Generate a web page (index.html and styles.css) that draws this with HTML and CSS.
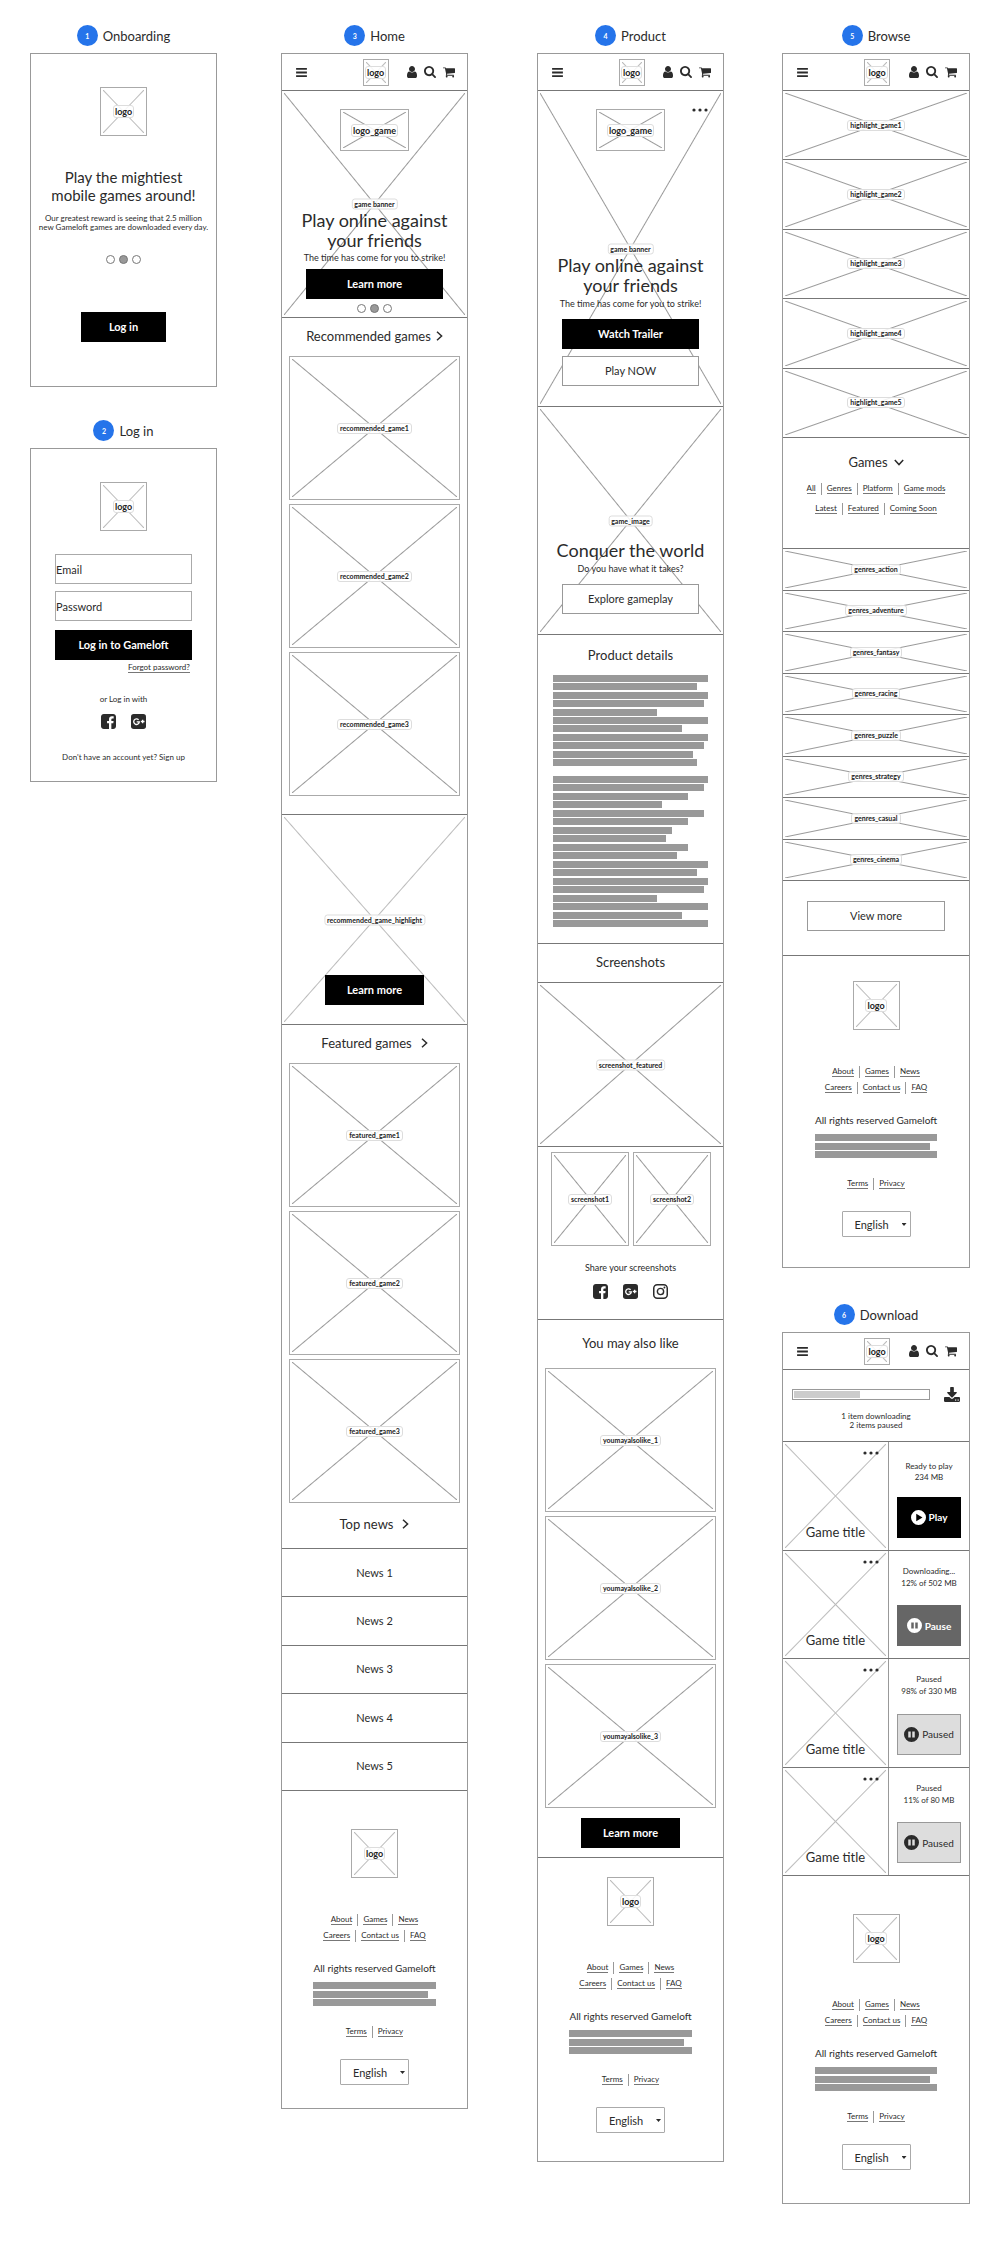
FILE: index.html
```html
<!DOCTYPE html>
<html lang="en">
<head>
<meta charset="utf-8">
<meta name="viewport" content="width=device-width, initial-scale=1">
<title>Gameloft mobile wireframes</title>
<link rel="stylesheet" href="styles.css">
</head>
<body>
<svg class="sprite" aria-hidden="true">
  <symbol id="i-menu" viewBox="0 0 12 10"><path d="M0 0h12v2H0zM0 4h12v2H0zM0 8h12v2H0z"/></symbol>
  <symbol id="i-user" viewBox="256 128 1280 1536"><path d="M1536 1399q0 109-62.5 187t-150.5 78h-854q-88 0-150.5-78t-62.5-187q0-85 8.5-160.5t31.5-152 58.5-131 94-89 134.5-34.5q131 128 313 128t313-128q76 0 134.5 34.5t94 89 58.5 131 31.5 152 8.5 160.5zm-256-887q0 159-112.5 271.5t-271.5 112.5-271.5-112.5-112.5-271.5 112.5-271.5 271.5-112.5 271.5 112.5 112.5 271.5z"/></symbol>
  <symbol id="i-search" viewBox="64 128 1664 1664"><path d="M1216 832q0-185-131.5-316.5t-316.5-131.5-316.5 131.5-131.5 316.5 131.5 316.5 316.5 131.5 316.5-131.5 131.5-316.5zm512 832q0 52-38 90t-90 38q-54 0-90-38l-343-342q-179 124-399 124-143 0-273.5-55.5t-225-150-150-225-55.5-273.5 55.5-273.5 150-225 225-150 273.5-55.5 273.5 55.5 225 150 150 225 55.5 273.5q0 220-124 399l343 343q37 37 37 90z"/></symbol>
  <symbol id="i-cart" viewBox="64 256 1664 1408"><path d="M704 1536q0 52-38 90t-90 38-90-38-38-90 38-90 90-38 90 38 38 90zm896 0q0 52-38 90t-90 38-90-38-38-90 38-90 90-38 90 38 38 90zm128-1088v512q0 24-16.5 42.5t-40.5 21.5l-1044 122q13 60 13 70 0 16-24 64h920q26 0 45 19t19 45-19 45-45 19h-1024q-26 0-45-19t-19-45q0-11 8-31.5t16-36 21.5-40 15.5-29.5l-177-823h-204q-26 0-45-19t-19-45 19-45 45-19h256q16 0 28.5 6.5t19.5 15.5 13 24.5 8 26 5.5 29.5 4.5 26h1201q26 0 45 19t19 45z"/></symbol>
  <symbol id="i-facebook" viewBox="128 128 1536 1536"><path d="M1376 128q119 0 203.5 84.5t84.5 203.5v960q0 119-84.5 203.5t-203.5 84.5h-188v-595h199l30-232h-229v-148q0-56 23.5-84t91.5-28l122-1v-207q-63-9-178-9-136 0-217.5 80t-81.5 226v171h-200v232h200v595h-532q-119 0-203.5-84.5t-84.5-203.5v-960q0-119 84.5-203.5t203.5-84.5h960z"/></symbol>
  <symbol id="i-google" viewBox="0 0 30 30"><rect width="30" height="30" rx="5.5"/><path d="M15.2 11.6A5.6 5.6 0 1 0 16.6 15.8H11.4M19.6 15H27M23.3 11.3V18.7" fill="none" stroke="#fff" stroke-width="2.6"/></symbol>
  <symbol id="i-instagram" viewBox="0 0 30 30"><rect x="1.5" y="1.5" width="27" height="27" rx="7" fill="none" stroke="currentColor" stroke-width="3"/><circle cx="15" cy="15" r="6.3" fill="none" stroke="currentColor" stroke-width="2.8"/><circle cx="22.9" cy="7.1" r="1.9"/></symbol>
  <symbol id="i-download" viewBox="64 0 1664 1536"><path d="M1344 1344q0-26-19-45t-45-19-45 19-19 45 19 45 45 19 45-19 19-45zm256 0q0-26-19-45t-45-19-45 19-19 45 19 45 45 19 45-19 19-45zm128-224v320q0 40-28 68t-68 28h-1472q-40 0-68-28t-28-68v-320q0-40 28-68t68-28h465l135 136q58 56 136 56t136-56l136-136h464q40 0 68 28t28 68zm-325-569q17 41-14 70l-448 448q-18 19-45 19t-45-19l-448-448q-31-29-14-70 17-39 59-39h256v-448q0-26 19-45t45-19h256q26 0 45 19t19 45v448h256q42 0 59 39z"/></symbol>
  <symbol id="i-chevron" viewBox="0 0 7 10"><path d="M1 .8L5.6 5 1 9.2" fill="none" stroke="currentColor" stroke-width="1.5"/></symbol>
  <symbol id="i-chevron-down" viewBox="0 0 10 7"><path d="M.8 1L5 5.6 9.2 1" fill="none" stroke="currentColor" stroke-width="1.5"/></symbol>
  <symbol id="i-play" viewBox="0 0 30 30"><path fill-rule="evenodd" d="M15 0a15 15 0 1 1 0 30a15 15 0 1 1 0-30zM10.5 7.5v15L23 15z"/></symbol>
  <symbol id="i-pause" viewBox="0 0 30 30"><path fill-rule="evenodd" d="M15 0a15 15 0 1 1 0 30a15 15 0 1 1 0-30zM8.5 9v12h5V9zM16.5 9v12h5V9z"/></symbol>
  <symbol id="i-dots" viewBox="0 0 16 4"><circle cx="2" cy="2" r="1.6"/><circle cx="8" cy="2" r="1.6"/><circle cx="14" cy="2" r="1.6"/></symbol>
</svg>

<main class="board">

  <div class="column">
    <section class="screen">
      <h2 class="screen-name"><span class="step">1</span>Onboarding</h2>
      <div class="panel panel-entry">
        <div class="frame logo"><span class="tag tag-logo">logo</span></div>
        <h3 class="intro-title">Play the mightiest<br>mobile games around!</h3>
        <p class="intro-text">Our greatest reward is seeing that 2.5 million<br>new Gameloft games are downloaded every day.</p>
        <div class="dots intro-dots"><i></i><i class="on"></i><i></i></div>
        <button class="btn btn-dark btn-login">Log in</button>
      </div>
    </section>

    <section class="screen">
      <h2 class="screen-name"><span class="step">2</span>Log in</h2>
      <form class="panel panel-entry">
        <div class="frame logo"><span class="tag tag-logo">logo</span></div>
        <div class="fields">
          <input class="field" type="email" placeholder="Email" aria-label="Email">
          <input class="field" type="password" placeholder="Password" aria-label="Password">
          <button class="btn btn-dark btn-submit" type="button">Log in to Gameloft</button>
          <a class="link forgot" href="#">Forgot password?</a>
        </div>
        <p class="small or-with">or Log in with</p>
        <div class="social social-login">
          <a href="#" aria-label="Facebook"><svg class="ico-social"><use href="#i-facebook"/></svg></a>
          <a href="#" aria-label="Google Plus"><svg class="ico-social"><use href="#i-google"/></svg></a>
        </div>
        <p class="small signup">Don't have an account yet? <a href="#">Sign up</a></p>
      </form>
    </section>
  </div>

  <div class="column">
    <section class="screen">
      <h2 class="screen-name"><span class="step">3</span>Home</h2>
      <div class="panel">
        <header class="topbar">
          <button class="icon-btn" aria-label="Menu"><svg class="ico-menu"><use href="#i-menu"/></svg></button>
          <div class="frame logo-small"><span class="tag tag-logo">logo</span></div>
          <div class="tools">
            <button class="icon-btn" aria-label="Account"><svg class="ico-user"><use href="#i-user"/></svg></button>
            <button class="icon-btn" aria-label="Search"><svg class="ico-search"><use href="#i-search"/></svg></button>
            <button class="icon-btn" aria-label="Cart"><svg class="ico-cart"><use href="#i-cart"/></svg></button>
          </div>
        </header>
        <section class="part cross banner banner-home">
          <span class="tag tag-center">game banner</span>
          <div class="frame logo-game"><span class="tag tag-logo">logo_game</span></div>
          <h3 class="hero-title">Play online against<br>your friends</h3>
          <p class="hero-text">The time has come for you to strike!</p>
          <button class="btn btn-dark btn-wide">Learn more</button>
          <div class="dots"><i></i><i class="on"></i><i></i></div>
        </section>
        <section class="part">
          <h3 class="part-title"><a href="#">Recommended games</a><svg class="ico-chevron near"><use href="#i-chevron"/></svg></h3>
          <div class="cards">
            <div class="frame card"><span class="tag">recommended_game1</span></div>
            <div class="frame card"><span class="tag">recommended_game2</span></div>
            <div class="frame card"><span class="tag">recommended_game3</span></div>
          </div>
        </section>
        <section class="part cross cross-light highlight">
          <span class="tag tag-center">recommended_game_highlight</span>
          <button class="btn btn-dark btn-short">Learn more</button>
        </section>
        <section class="part">
          <h3 class="part-title"><a href="#">Featured games</a><svg class="ico-chevron"><use href="#i-chevron"/></svg></h3>
          <div class="cards cards-last">
            <div class="frame card"><span class="tag">featured_game1</span></div>
            <div class="frame card"><span class="tag">featured_game2</span></div>
            <div class="frame card"><span class="tag">featured_game3</span></div>
          </div>
          <h3 class="part-title news-title"><a href="#">Top news</a><svg class="ico-chevron"><use href="#i-chevron"/></svg></h3>
        </section>
        <ul class="news">
          <li>News 1</li>
          <li>News 2</li>
          <li>News 3</li>
          <li>News 4</li>
          <li>News 5</li>
        </ul>
        <footer class="part foot foot-home">
          <div class="frame logo"><span class="tag tag-logo">logo</span></div>
          <nav class="links">
            <div class="links-row"><a class="link" href="#">About</a><a class="link" href="#">Games</a><a class="link" href="#">News</a></div>
            <div class="links-row"><a class="link" href="#">Careers</a><a class="link" href="#">Contact us</a><a class="link" href="#">FAQ</a></div>
          </nav>
          <p class="rights">All rights reserved Gameloft</p>
          <div class="legal"><i></i><i></i><i></i></div>
          <div class="links-row"><a class="link" href="#">Terms</a><a class="link" href="#">Privacy</a></div>
          <div class="lang"><select aria-label="Language"><option>English</option></select></div>
        </footer>
      </div>
    </section>
  </div>

  <div class="column">
    <section class="screen">
      <h2 class="screen-name"><span class="step">4</span>Product</h2>
      <div class="panel">
        <header class="topbar">
          <button class="icon-btn" aria-label="Menu"><svg class="ico-menu"><use href="#i-menu"/></svg></button>
          <div class="frame logo-small"><span class="tag tag-logo">logo</span></div>
          <div class="tools">
            <button class="icon-btn" aria-label="Account"><svg class="ico-user"><use href="#i-user"/></svg></button>
            <button class="icon-btn" aria-label="Search"><svg class="ico-search"><use href="#i-search"/></svg></button>
            <button class="icon-btn" aria-label="Cart"><svg class="ico-cart"><use href="#i-cart"/></svg></button>
          </div>
        </header>
        <section class="part cross banner banner-product">
          <span class="tag tag-center">game banner</span>
          <button class="icon-btn more-corner" aria-label="More"><svg class="ico-dots"><use href="#i-dots"/></svg></button>
          <div class="frame logo-game"><span class="tag tag-logo">logo_game</span></div>
          <h3 class="hero-title">Play online against<br>your friends</h3>
          <p class="hero-text">The time has come for you to strike!</p>
          <button class="btn btn-dark btn-wide">Watch Trailer</button>
          <button class="btn btn-wide btn-next">Play NOW</button>
        </section>
        <section class="part cross banner banner-image">
          <span class="tag tag-center">game_image</span>
          <h3 class="hero-title">Conquer the world</h3>
          <p class="hero-text">Do you have what it takes?</p>
          <button class="btn btn-wide">Explore gameplay</button>
        </section>
        <section class="part details">
          <h3 class="part-title">Product details</h3>
          <div class="lines lines-first">
            <i style="width:100%"></i><i style="width:93%"></i><i style="width:100%"></i><i style="width:97%"></i><i style="width:67%"></i><i style="width:100%"></i><i style="width:83%"></i><i style="width:100%"></i><i style="width:97%"></i><i style="width:90%"></i><i style="width:93%"></i>
          </div>
          <div class="lines lines-second">
            <i style="width:100%"></i><i style="width:97%"></i><i style="width:87%"></i><i style="width:70%"></i><i style="width:97%"></i><i style="width:87%"></i><i style="width:77%"></i><i style="width:73%"></i><i style="width:87%"></i><i style="width:80%"></i><i style="width:100%"></i><i style="width:93%"></i><i style="width:100%"></i><i style="width:97%"></i><i style="width:67%"></i><i style="width:100%"></i><i style="width:83%"></i><i style="width:100%"></i>
          </div>
        </section>
        <section class="part">
          <h3 class="part-title">Screenshots</h3>
        </section>
        <div class="part cross shot-featured"><span class="tag tag-center">screenshot_featured</span></div>
        <section class="part shots">
          <div class="thumbs">
            <div class="frame"><span class="tag">screenshot1</span></div>
            <div class="frame"><span class="tag">screenshot2</span></div>
          </div>
          <p class="share">Share your screenshots</p>
          <div class="social">
            <a href="#" aria-label="Facebook"><svg class="ico-social"><use href="#i-facebook"/></svg></a>
            <a href="#" aria-label="Google Plus"><svg class="ico-social"><use href="#i-google"/></svg></a>
            <a href="#" aria-label="Instagram"><svg class="ico-social"><use href="#i-instagram"/></svg></a>
          </div>
        </section>
        <section class="part also">
          <h3 class="part-title">You may also like</h3>
          <div class="cards">
            <div class="frame card"><span class="tag">youmayalsolike_1</span></div>
            <div class="frame card"><span class="tag">youmayalsolike_2</span></div>
            <div class="frame card"><span class="tag">youmayalsolike_3</span></div>
          </div>
          <button class="btn btn-dark btn-short">Learn more</button>
        </section>
        <footer class="part foot foot-product">
          <div class="frame logo"><span class="tag tag-logo">logo</span></div>
          <nav class="links">
            <div class="links-row"><a class="link" href="#">About</a><a class="link" href="#">Games</a><a class="link" href="#">News</a></div>
            <div class="links-row"><a class="link" href="#">Careers</a><a class="link" href="#">Contact us</a><a class="link" href="#">FAQ</a></div>
          </nav>
          <p class="rights">All rights reserved Gameloft</p>
          <div class="legal"><i></i><i></i><i></i></div>
          <div class="links-row"><a class="link" href="#">Terms</a><a class="link" href="#">Privacy</a></div>
          <div class="lang"><select aria-label="Language"><option>English</option></select></div>
        </footer>
      </div>
    </section>
  </div>

  <div class="column column-last">
    <section class="screen">
      <h2 class="screen-name"><span class="step">5</span>Browse</h2>
      <div class="panel">
        <header class="topbar">
          <button class="icon-btn" aria-label="Menu"><svg class="ico-menu"><use href="#i-menu"/></svg></button>
          <div class="frame logo-small"><span class="tag tag-logo">logo</span></div>
          <div class="tools">
            <button class="icon-btn" aria-label="Account"><svg class="ico-user"><use href="#i-user"/></svg></button>
            <button class="icon-btn" aria-label="Search"><svg class="ico-search"><use href="#i-search"/></svg></button>
            <button class="icon-btn" aria-label="Cart"><svg class="ico-cart"><use href="#i-cart"/></svg></button>
          </div>
        </header>
        <div class="strips strips-highlight">
          <div class="cross strip"><span class="tag">highlight_game1</span></div>
          <div class="cross strip"><span class="tag">highlight_game2</span></div>
          <div class="cross strip"><span class="tag">highlight_game3</span></div>
          <div class="cross strip"><span class="tag">highlight_game4</span></div>
          <div class="cross strip"><span class="tag">highlight_game5</span></div>
        </div>
        <section class="part games">
          <h3 class="part-title"><a href="#">Games</a><svg class="ico-chevron-down"><use href="#i-chevron-down"/></svg></h3>
          <nav class="filters">
            <div class="links-row"><a class="link" href="#">All</a><a class="link" href="#">Genres</a><a class="link" href="#">Platform</a><a class="link" href="#">Game mods</a></div>
            <div class="links-row"><a class="link" href="#">Latest</a><a class="link" href="#">Featured</a><a class="link" href="#">Coming Soon</a></div>
          </nav>
        </section>
        <div class="strips strips-genres">
          <div class="cross strip"><span class="tag">genres_action</span></div>
          <div class="cross strip"><span class="tag">genres_adventure</span></div>
          <div class="cross strip"><span class="tag">genres_fantasy</span></div>
          <div class="cross strip"><span class="tag">genres_racing</span></div>
          <div class="cross strip"><span class="tag">genres_puzzle</span></div>
          <div class="cross strip"><span class="tag">genres_strategy</span></div>
          <div class="cross strip"><span class="tag">genres_casual</span></div>
          <div class="cross strip"><span class="tag">genres_cinema</span></div>
        </div>
        <div class="part view-more"><button class="btn btn-wide">View more</button></div>
        <footer class="part foot foot-browse">
          <div class="frame logo"><span class="tag tag-logo">logo</span></div>
          <nav class="links">
            <div class="links-row"><a class="link" href="#">About</a><a class="link" href="#">Games</a><a class="link" href="#">News</a></div>
            <div class="links-row"><a class="link" href="#">Careers</a><a class="link" href="#">Contact us</a><a class="link" href="#">FAQ</a></div>
          </nav>
          <p class="rights">All rights reserved Gameloft</p>
          <div class="legal"><i></i><i></i><i></i></div>
          <div class="links-row"><a class="link" href="#">Terms</a><a class="link" href="#">Privacy</a></div>
          <div class="lang"><select aria-label="Language"><option>English</option></select></div>
        </footer>
      </div>
    </section>

    <section class="screen">
      <h2 class="screen-name"><span class="step">6</span>Download</h2>
      <div class="panel">
        <header class="topbar">
          <button class="icon-btn" aria-label="Menu"><svg class="ico-menu"><use href="#i-menu"/></svg></button>
          <div class="frame logo-small"><span class="tag tag-logo">logo</span></div>
          <div class="tools">
            <button class="icon-btn" aria-label="Account"><svg class="ico-user"><use href="#i-user"/></svg></button>
            <button class="icon-btn" aria-label="Search"><svg class="ico-search"><use href="#i-search"/></svg></button>
            <button class="icon-btn" aria-label="Cart"><svg class="ico-cart"><use href="#i-cart"/></svg></button>
          </div>
        </header>
        <section class="part status">
          <div class="status-row">
            <progress value="49" max="100" aria-label="Download progress"></progress>
            <svg class="ico-download"><use href="#i-download"/></svg>
          </div>
          <p class="status-text">1 item downloading<br>2 items paused</p>
        </section>
        <div class="downloads">
          <article class="download">
            <div class="cross cross-light cover"><button class="icon-btn" aria-label="More"><svg class="ico-dots"><use href="#i-dots"/></svg></button><h3 class="game-title">Game title</h3></div>
            <div class="state state-ready"><p>Ready to play<br>234 MB</p><button class="btn btn-dark btn-state"><svg class="ico-state"><use href="#i-play"/></svg>Play</button></div>
          </article>
          <article class="download">
            <div class="cross cross-light cover"><button class="icon-btn" aria-label="More"><svg class="ico-dots"><use href="#i-dots"/></svg></button><h3 class="game-title">Game title</h3></div>
            <div class="state"><p>Downloading...<br>12% of 502 MB</p><button class="btn btn-gray btn-state"><svg class="ico-state"><use href="#i-pause"/></svg>Pause</button></div>
          </article>
          <article class="download">
            <div class="cross cross-light cover"><button class="icon-btn" aria-label="More"><svg class="ico-dots"><use href="#i-dots"/></svg></button><h3 class="game-title">Game title</h3></div>
            <div class="state"><p>Paused<br>98% of 330 MB</p><button class="btn btn-pale btn-state"><svg class="ico-state"><use href="#i-pause"/></svg>Paused</button></div>
          </article>
          <article class="download">
            <div class="cross cross-light cover"><button class="icon-btn" aria-label="More"><svg class="ico-dots"><use href="#i-dots"/></svg></button><h3 class="game-title">Game title</h3></div>
            <div class="state"><p>Paused<br>11% of 80 MB</p><button class="btn btn-pale btn-state"><svg class="ico-state"><use href="#i-pause"/></svg>Paused</button></div>
          </article>
        </div>
        <footer class="part foot foot-download">
          <div class="frame logo"><span class="tag tag-logo">logo</span></div>
          <nav class="links">
            <div class="links-row"><a class="link" href="#">About</a><a class="link" href="#">Games</a><a class="link" href="#">News</a></div>
            <div class="links-row"><a class="link" href="#">Careers</a><a class="link" href="#">Contact us</a><a class="link" href="#">FAQ</a></div>
          </nav>
          <p class="rights">All rights reserved Gameloft</p>
          <div class="legal"><i></i><i></i><i></i></div>
          <div class="links-row"><a class="link" href="#">Terms</a><a class="link" href="#">Privacy</a></div>
          <div class="lang"><select aria-label="Language"><option>English</option></select></div>
        </footer>
      </div>
    </section>
  </div>

</main>
</body>
</html>
```
FILE: styles.css
```css
:root {
  --ink: #2b2b2b;
  --line: #999;
  --line-dark: #777;
  --cross: #999;
  --bar: #999;
}

* { box-sizing: border-box; }

body {
  margin: 0;
  background: #fff;
  color: var(--ink);
  font-family: Lato, "Noto Sans", sans-serif;
  font-size: 8px;
  line-height: 12px;
}

h2, h3, p, ul { margin: 0; padding: 0; font-weight: 400; }
a { color: inherit; text-decoration: none; }
svg { display: block; fill: currentColor; }
button, input, select { font-family: inherit; color: inherit; margin: 0; }
.sprite { position: absolute; width: 0; height: 0; }

/* Board: four columns with uneven gutters */
.board {
  display: grid;
  grid-template-columns:
    minmax(0, 187fr) minmax(0, 64fr) minmax(0, 187fr) minmax(0, 69fr)
    minmax(0, 187fr) minmax(0, 58fr) minmax(0, 188fr);
  align-items: start;
  padding: 25px 3% 64px;
}
.column { display: flex; flex-direction: column; gap: 33px; }
.column:nth-child(2) { grid-column: 3; }
.column:nth-child(3) { grid-column: 5; }
.column:nth-child(4) { grid-column: 7; }
.column-last { gap: 36px; }

.screen-name {
  display: flex;
  justify-content: center;
  align-items: center;
  gap: 5px;
  height: 21px;
  margin-bottom: 7px;
  font-size: 13px;
}
.step {
  display: grid;
  place-items: center;
  width: 21px;
  height: 21px;
  border-radius: 50%;
  background: #2574ea;
  color: #fff;
  font-size: 7px;
  font-weight: 700;
  line-height: 8px;
}
.panel { border: 1px solid var(--line); }
.part { border-top: 1px solid var(--line-dark); }

/* Image placeholders */
.frame, .cross { position: relative; }
.frame {
  display: grid;
  place-items: center;
  border: 1px solid #aaa;
}
.frame::before, .cross::before {
  content: "";
  position: absolute;
  inset: 2px;
  background:
    linear-gradient(to top right, transparent calc(50% - 1px), var(--cross) 50%, transparent calc(50% + 1px)),
    linear-gradient(to bottom right, transparent calc(50% - 1px), var(--cross) 50%, transparent calc(50% + 1px));
}
.cross-light { --cross: #bbb; }
.cross > * { position: relative; }
.tag {
  position: relative;
  padding: 0 2px;
  border: 1px solid #ddd;
  border-radius: 3px;
  background: rgba(255, 255, 255, .85);
  color: #222;
  font-size: 7px;
  font-weight: 700;
  line-height: 9px;
}
.tag-logo { padding: 0 1px; font-size: 9px; line-height: 11px; }
.cross > .tag-center {
  position: absolute;
  top: 50%;
  left: 50%;
  transform: translate(-50%, -50%);
}
.logo { width: 47px; height: 49px; --cross: #bbb; }
.logo-small { width: 26px; height: 27px; --cross: #bbb; }
.logo-game { width: 69px; height: 42px; }

/* Buttons */
.btn {
  height: 30px;
  padding: 0;
  border: 1px solid var(--line);
  border-radius: 0;
  background: #fff;
  font-size: 11px;
  line-height: 14px;
}
.btn-dark { border-color: #000; background: #000; color: #fff; font-weight: 700; }
.btn-gray { border-color: #666; background: #666; color: #fff; font-weight: 700; }
.btn-pale { background: #ddd; }
.btn-wide { width: 74%; }
.btn-short { width: 53%; }
.btn-login { width: 46%; }
.icon-btn { padding: 0; border: 0; background: none; }

/* Pager dots */
.dots { display: flex; gap: 4px; }
.dots i {
  width: 9px;
  height: 9px;
  border: 1px solid var(--line-dark);
  border-radius: 50%;
  background: #fff;
}
.dots .on { background: var(--bar); }

/* Onboarding and log in */
.panel-entry {
  display: flex;
  flex-direction: column;
  align-items: center;
  min-height: 334px;
  padding: 33px 0 18px;
}
.intro-title { margin-top: 32px; font-size: 15px; line-height: 18px; text-align: center; }
.intro-text { margin-top: 10px; line-height: 9px; text-align: center; white-space: nowrap; }
.intro-dots { margin: 23px 0 48px; }
.fields {
  display: flex;
  flex-direction: column;
  width: 74%;
  margin-top: 23px;
}
.field {
  width: 100%;
  height: 30px;
  margin-bottom: 7px;
  padding: 0;
  border: 1px solid #aaa;
  background: #fff;
  font-size: 11px;
}
.field::placeholder { color: var(--ink); opacity: 1; }
.btn-submit { margin-top: 2px; }
.link { border-bottom: 1px solid #777; line-height: 9px; }
.forgot { align-self: flex-end; margin: 3px 2px 0 0; }
.or-with { margin-top: 20px; }
.social { display: flex; justify-content: center; gap: 15px; }
.social-login { margin: 9px 0 22px; }
.ico-social { width: 15px; height: 15px; }

/* Header */
.topbar {
  display: grid;
  grid-template-columns: 1fr auto 1fr;
  align-items: center;
  height: 36px;
  padding: 0 12px 0 14px;
}
.tools { display: flex; justify-content: flex-end; align-items: center; gap: 7px; }
.topbar .icon-btn { justify-self: start; }
.ico-menu { width: 11px; height: 9px; }
.ico-user { width: 10px; height: 12px; }
.ico-search { width: 12px; height: 12px; }
.ico-cart { width: 12px; height: 11px; }
.ico-dots { width: 16px; height: 4px; }

/* Banners */
.banner { display: flex; flex-direction: column; align-items: center; }
.hero-title { font-size: 18px; line-height: 20px; text-align: center; white-space: nowrap; }
.hero-text { font-size: 9px; white-space: nowrap; }
.banner-home { padding: 18px 0 4px; }
.banner-home .hero-title { margin-top: 59px; }
.banner-home .hero-text { margin: 2px 0 5px; }
.banner-home .dots { margin-top: 5px; }
.banner-product { padding: 18px 0 20px; }
.banner-product .hero-title { margin-top: 104px; }
.banner-product .hero-text, .banner-image .hero-text { margin: 3px 0 9px; }
.btn-next { margin-top: 7px; }
.banner-image { padding: 133px 0 20px; }
.cross > .more-corner { position: absolute; top: 17px; right: 15px; }
.highlight {
  display: flex;
  justify-content: center;
  align-items: flex-end;
  height: 210px;
  padding-bottom: 19px;
}

/* Section titles and card lists */
.part-title {
  display: flex;
  justify-content: center;
  align-items: center;
  gap: 9px;
  padding: 10px 0 12px;
  font-size: 13px;
  line-height: 16px;
}
.ico-chevron { width: 7px; height: 10px; }
.ico-chevron.near { margin-left: -4px; }
.ico-chevron-down { width: 10px; height: 7px; }
.cards {
  display: flex;
  flex-direction: column;
  gap: 4px;
  width: 92%;
  margin: 0 auto;
  padding-bottom: 18px;
}
.cards-last { padding-bottom: 3px; }
.card { height: 144px; }
.news-title { padding-bottom: 16px; }
.news {
  display: grid;
  grid-auto-rows: 1fr;
  height: 242px;
  list-style: none;
  font-size: 11px;
}
.news li { display: grid; place-items: center; border-top: 1px solid var(--line-dark); }

/* Product page */
.details .part-title { padding: 12px 0; }
.lines {
  display: flex;
  flex-direction: column;
  justify-content: space-between;
  width: 84%;
  margin: 0 auto;
}
.lines i { height: 7px; background: var(--bar); }
.lines-first { height: 91px; margin-bottom: 10px; }
.lines-second { height: 151px; margin-bottom: 16px; }
.shot-featured { height: 164px; }
.shots { padding: 5px 0 20px; }
.thumbs {
  display: grid;
  grid-template-columns: 1fr 1fr;
  gap: 4px;
  padding: 0 12px 0 13px;
}
.thumbs .frame { height: 94px; }
.share { margin: 16px 0 10px; font-size: 9px; text-align: center; }
.also { display: flex; flex-direction: column; align-items: center; padding-bottom: 9px; }
.also .part-title { padding: 15px 0 17px; }
.also .cards { padding-bottom: 10px; }

/* Browse page */
.strips { display: grid; grid-auto-rows: 1fr; }
.strips-highlight { height: 347px; }
.strips-genres { height: 332px; }
.strip { display: grid; place-items: center; border-top: 1px solid var(--line-dark); }
.games .part-title { gap: 6px; padding: 16px 0 13px; }
.filters { display: grid; gap: 8px; padding-bottom: 33px; }
.view-more { padding: 20px 0 24px; }
.view-more .btn { display: block; margin: 0 auto; }

/* Download page */
.status { padding: 16px 9px 11px; }
.status-row { display: flex; justify-content: space-between; align-items: center; height: 16px; gap: 8px; }
.ico-download { width: 16px; height: 15px; }
progress {
  appearance: none;
  width: 82%;
  height: 11px;
  padding: 1px;
  border: 1px solid var(--line);
  background: #fff;
}
progress::-webkit-progress-bar { background: #fff; }
progress::-webkit-progress-value { background: #ccc; }
progress::-moz-progress-bar { background: #ccc; }
.status-text { margin-top: 10px; line-height: 9px; text-align: center; }
.downloads { display: grid; grid-auto-rows: 1fr; height: 434px; }
.download {
  display: grid;
  grid-template-columns: 106fr 80fr;
  border-top: 1px solid var(--line-dark);
}
.cover {
  display: flex;
  flex-direction: column;
  justify-content: space-between;
  align-items: center;
  padding: 9px 0 10px;
  border-right: 1px solid var(--line);
}
.cover .icon-btn { align-self: flex-end; margin-right: 9px; }
.game-title { font-size: 13px; line-height: 16px; }
.state {
  display: flex;
  flex-direction: column;
  justify-content: space-between;
  align-items: center;
  padding: 14px 8px 12px;
  text-align: center;
}
.state-ready { padding-top: 19px; line-height: 11px; }
.btn-state {
  display: flex;
  justify-content: center;
  align-items: center;
  gap: 3px;
  width: 100%;
  height: 41px;
  font-size: 10px;
}
.ico-state { width: 15px; height: 15px; }

/* Footer */
.foot { display: flex; flex-direction: column; align-items: center; }
.foot-home { padding: 38px 0 23px; }
.foot-product { padding: 19px 0 28px; }
.foot-browse { padding: 25px 0 30px; }
.foot-download { padding: 38px 0 33px; }
.links { display: grid; gap: 4px; margin-top: 36px; }
.links-row { display: flex; justify-content: center; align-items: center; height: 12px; }
.links-row .link { position: relative; }
.links-row .link + .link { margin-left: 11px; }
.links-row .link + .link::before {
  content: "";
  position: absolute;
  left: -6px;
  top: -1px;
  width: 1px;
  height: 12px;
  background: var(--line);
}
.rights { margin: 20px 0 8px; font-size: 10px; }
.legal {
  display: flex;
  flex-direction: column;
  justify-content: space-between;
  width: 66%;
  height: 24px;
  margin-bottom: 20px;
}
.legal i { height: 7px; background: var(--bar); }
.legal i:nth-child(2) { width: 94%; }
.lang { position: relative; margin-top: 21px; }
.lang select {
  display: block;
  appearance: none;
  width: 69px;
  height: 26px;
  padding: 0 12px;
  border: 1px solid #aaa;
  border-radius: 1px;
  background: #fff;
  font-size: 11px;
}
.lang::after {
  content: "";
  position: absolute;
  right: 4px;
  top: 12px;
  width: 5px;
  height: 3px;
  background: var(--ink);
  clip-path: polygon(0 0, 100% 0, 50% 100%);
}
```
